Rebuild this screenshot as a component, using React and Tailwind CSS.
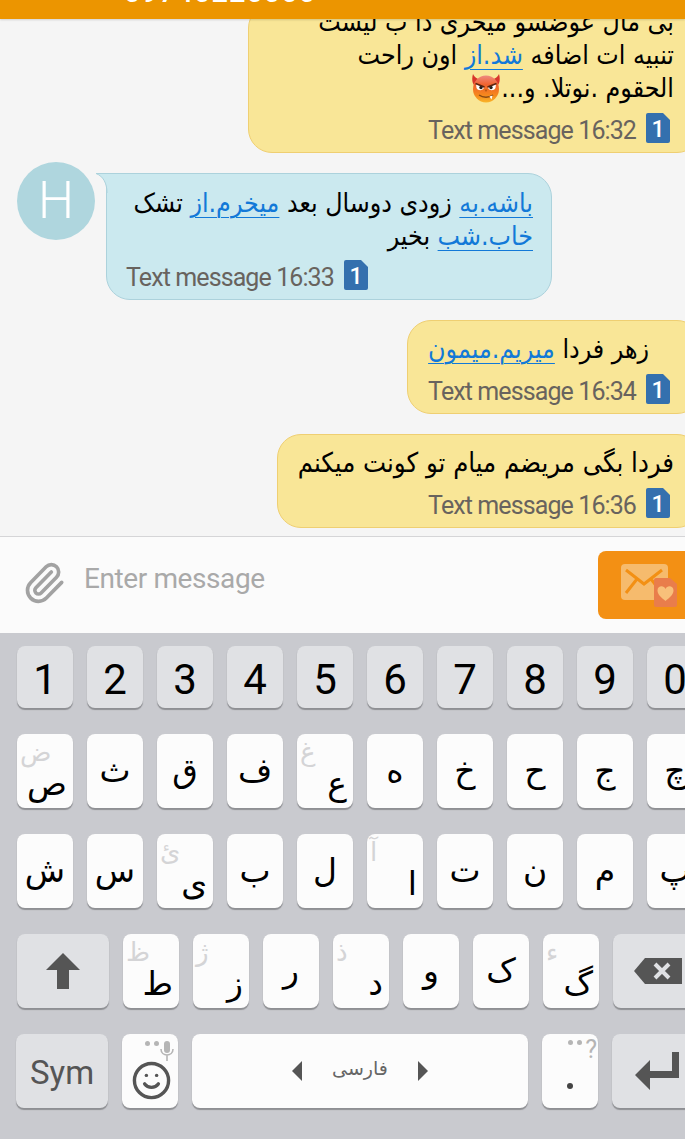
import { Paperclip, Smile } from 'lucide-react';

const row2 = [
  { c: 'ص', h: 'ض' }, { c: 'ث' }, { c: 'ق' }, { c: 'ف' }, { c: 'ع', h: 'غ' },
  { c: 'ه' }, { c: 'خ' }, { c: 'ح' }, { c: 'ج' }, { c: 'چ' },
];
const row3 = [
  { c: 'ش' }, { c: 'س' }, { c: 'ی', h: 'ئ' }, { c: 'ب' }, { c: 'ل' },
  { c: 'ا', h: 'آ' }, { c: 'ت' }, { c: 'ن' }, { c: 'م' }, { c: 'پ' },
];
const row4 = [
  { c: 'ط', h: 'ظ' }, { c: 'ز', h: 'ژ' }, { c: 'ر' }, { c: 'د', h: 'ذ' },
  { c: 'و' }, { c: 'ک' }, { c: 'گ', h: 'ء' },
];

const arabic = "font-['DejaVu_Sans',sans-serif]";
const bubbleText = "font-['DejaVu_Sans',sans-serif] [font-stretch:condensed] text-[26.5px] leading-[33px] text-black";

function Sim() {
  return (
    <svg width="24" height="30" viewBox="0 0 24 30" className="shrink-0">
      <path d="M2 0H17L24 7V28A2 2 0 0 1 22 30H2A2 2 0 0 1 0 28V2A2 2 0 0 1 2 0Z" fill="#3470ae" />
      <text x="12" y="24" textAnchor="middle" fontSize="23" fontWeight="500" fill="#fff" fontFamily="Roboto, sans-serif">1</text>
    </svg>
  );
}

function Meta({ time, reverse }) {
  return (
    <div dir="ltr" className={`flex items-end gap-[10px] ${reverse ? 'justify-end' : 'justify-start'}`}>
      <span className="font-['Roboto',sans-serif] text-[25px] leading-[24px] tracking-[-0.9px] text-[#68635e]">
        Text message {time}
      </span>
      <Sim />
    </div>
  );
}

function Link({ children }) {
  return <span className="text-[#1279d8] underline underline-offset-[5px] decoration-[1px]">{children}</span>;
}

function Devil() {
  return (
    <svg width="30" height="30" viewBox="0 0 30 30" className="inline-block align-[-6px]">
      <defs>
        <linearGradient id="devilFace" x1="0" y1="0" x2="0" y2="1">
          <stop offset="0" stopColor="#ee8a80" />
          <stop offset="0.35" stopColor="#f0622c" />
          <stop offset="0.75" stopColor="#f68a1c" />
          <stop offset="1" stopColor="#f9b52a" />
        </linearGradient>
      </defs>
      <path d="M2 1C0 8 2 13 7 15L12 7C8 7 4 5 2 1ZM28 1C30 8 28 13 23 15L18 7C22 7 26 5 28 1Z" fill="#d8352a" />
      <ellipse cx="15" cy="16" rx="13" ry="13.5" fill="url(#devilFace)" />
      <path d="M5 11L13 14.500C12 18 7 18 5.500 15ZM25 11L17 14.500C18 18 23 18 24.500 15Z" fill="#fff" />
      <circle cx="10" cy="14.500" r="1.700" fill="#222" />
      <circle cx="20" cy="14.500" r="1.700" fill="#222" />
      <path d="M4.500 10.500L13.500 14M25.500 10.500L16.500 14" stroke="#5a2410" strokeWidth="1.600" />
      <path d="M13.500 16.500H16.500L15 19Z" fill="#b85a10" />
      <path d="M8 22C12 25 18 25 22 22" stroke="#8a4a12" strokeWidth="1.300" fill="none" />
      <path d="M18.500 23.500L20.500 26.500L21.500 22.500Z" fill="#fff" />
    </svg>
  );
}

function Outgoing({ children, time, className }) {
  return (
    <div className={`shrink-0 -mr-4 pr-[30px] pb-[9px] rounded-[24px] border border-[#efcf72] bg-[#f9e697] ${className}`}>
      <div dir="rtl" className={`-mr-[4px] ${bubbleText}`}>{children}</div>
      <Meta time={time} reverse />
    </div>
  );
}

function Key({ c, h }) {
  return (
    <div className="relative flex h-[74px] w-[56px] shrink-0 rounded-lg bg-[#fcfcfc] shadow-[0_1.5px_1px_#8e8f93]">
      {h && (
        <span className={`${arabic} absolute left-[3px] top-[3px] text-[26px] leading-[30px] text-[#d4d4d6]`}>{h}</span>
      )}
      <span
        className={`${arabic} text-[33px] leading-[40px] text-black ${
          h ? 'ml-auto mt-auto mr-[6px] mb-[4px]' : 'm-auto'
        }`}
      >
        {c}
      </span>
    </div>
  );
}

function FnKey({ children, className }) {
  return (
    <div className={`flex h-[74px] shrink-0 items-center justify-center rounded-lg bg-[#e0e1e4] shadow-[0_1.5px_1px_#8e8f93] ${className}`}>
      {children}
    </div>
  );
}

export default function App() {
  return (
    <div className="flex h-[1139px] w-[685px] flex-col overflow-hidden bg-[#f5f5f5]">
      {/* Top bar, the number is cut off by the screen edge */}
      <div className="relative z-10 h-[19px] shrink-0 overflow-hidden bg-[#ec9500] pl-[124px] shadow-[0_1px_2px_rgba(0,0,0,0.15)]">
        <div className="-mt-[23px] font-['Roboto',sans-serif] text-[29px] font-medium leading-[30px] tracking-[1px] text-white">
          09740220000
        </div>
      </div>

      {/* Messages */}
      <div className="flex h-[517px] shrink-0 flex-col items-end justify-end gap-5 overflow-hidden pb-2">
        <Outgoing time="16:32" className="w-[453px] pl-[20px]">
          <div>بی مال عوضسو میخری دا ب لیست</div>
          <div>تنبیه ات اضافه <Link>شد.از</Link> اون راحت</div>
          <div className="mb-[9px]">الحقوم .نوتلا. و...<Devil /></div>
        </Outgoing>

        <div className="flex w-full shrink-0 items-start pl-[17px]">
          <div className="-mt-[11px] flex h-[78px] w-[78px] shrink-0 items-center justify-center rounded-full bg-[#afd6de] font-['Roboto',sans-serif] text-[51px] font-light text-white">
            H
          </div>
          <div className="relative ml-[11px] w-[446px] rounded-[24px] rounded-tl-none border border-[#acd2dc] bg-[#cbe9ef] pb-[9px] pl-[19px] pr-[18px] pt-[12px]">
            <svg width="12" height="20" viewBox="0 0 12 20" className="absolute -left-[11px] -top-px">
              <path d="M0 .5H12V20H11C11 10 7 3 0 .5Z" fill="#cbe9ef" />
              <path d="M0 .5H12M0 .5C7 3 11 10 11 20" stroke="#acd2dc" fill="none" />
            </svg>
            <div dir="rtl" className={`mb-[8px] ${bubbleText}`}>
              <Link>باشه.به</Link> زودی دوسال بعد <Link>میخرم.از</Link> تشک <Link>خاب.شب</Link> بخیر
            </div>
            <Meta time="16:33" />
          </div>
        </div>

        <Outgoing time="16:34" className="pl-[20px] pt-[11px]">
          <div className="mb-[9px] text-left">زهر فردا <Link>میریم.میمون</Link></div>
        </Outgoing>

        <Outgoing time="16:36" className="pl-[20px] pt-[11px]">
          <div className="mb-[9px] text-[27.2px]">فردا بگی مریضم میام تو کونت میکنم</div>
        </Outgoing>
      </div>

      {/* Composer */}
      <div className="flex h-[97px] shrink-0 items-center border-t border-[#d5d5d7] bg-[#fbfbfb]">
        <Paperclip size={44} strokeWidth={2} className="ml-[22px] -mt-[4px] shrink-0 text-[#a2a2a2]" />
        <span className="ml-[18px] -mt-[12px] font-['Roboto',sans-serif] text-[28px] tracking-[-0.4px] text-[#a9a9a9]">
          Enter message
        </span>
        <div className="ml-auto flex h-[68px] w-[87px] shrink-0 items-center rounded-l-lg bg-[#f39014] pl-[22px]">
          <svg width="58" height="46" viewBox="0 0 58 46">
            <rect x="1" y="2" width="47" height="36" rx="4" fill="#f6bb6d" />
            <path d="M6 8L24 22L42 8M6 31L17 17M42 31L31 17" stroke="#f39014" strokeWidth="3" fill="none" />
            <path d="M36 16H50L57 22V43A2 2 0 0 1 55 45H36A2 2 0 0 1 34 43V18A2 2 0 0 1 36 16Z" fill="#e97d4b" />
            <path d="M45.500 39C42 36 37.500 33 37.500 28.500C37.500 23.500 44 23 45.500 27C47 23 53.500 23.500 53.500 28.500C53.500 33 49 36 45.500 39Z" fill="#f8c07a" />
          </svg>
        </div>
      </div>

      {/* Keyboard */}
      <div className="flex min-h-0 flex-1 flex-col overflow-hidden bg-[#c9cacf] pt-[13px]">
        <div className="flex gap-[14px] pl-[17px]">
          {['1', '2', '3', '4', '5', '6', '7', '8', '9', '0'].map((d) => (
            <div
              key={d}
              className="flex h-[62px] w-[56px] shrink-0 items-center justify-center rounded-lg bg-[#e0e1e4] pt-[5px] font-['Roboto',sans-serif] text-[42px] text-black shadow-[0_1.5px_1px_#8e8f93]"
            >
              {d}
            </div>
          ))}
        </div>

        <div className="mt-[26px] flex gap-[14px] pl-[17px]">
          {row2.map((k) => <Key key={k.c} {...k} />)}
        </div>

        <div className="mt-[26px] flex gap-[14px] pl-[17px]">
          {row3.map((k) => <Key key={k.c} {...k} />)}
        </div>

        <div className="mt-[26px] flex gap-[14px] pl-[17px]">
          <FnKey className="w-[92px]">
            <svg width="34" height="36" viewBox="0 0 34 36">
              <path d="M17 0L34 17H23V36H11V17H0Z" fill="#555" />
            </svg>
          </FnKey>
          {row4.map((k) => <Key key={k.c} {...k} />)}
          <FnKey className="w-[90px] justify-start pl-[21px]">
            <svg width="48" height="27" viewBox="0 0 48 27">
              <path d="M11 0H48V26H11L0 13Z" fill="#555" />
              <path d="M21 6L35 20M35 6L21 20" stroke="#e0e1e4" strokeWidth="4" />
            </svg>
          </FnKey>
        </div>

        <div className="mt-[26px] flex gap-[14px] pl-[16px]">
          <FnKey className="w-[92px] pt-[4px] font-['Roboto',sans-serif] text-[33px] text-[#555]">Sym</FnKey>
          <div className="relative flex h-[74px] w-[56px] shrink-0 items-end justify-start rounded-lg bg-[#fcfcfc] pb-[7px] pl-[9px] shadow-[0_1.5px_1px_#8e8f93]">
            <span className="absolute left-[23px] top-[7px] h-[5px] w-[5px] rounded-full bg-[#b5b5b5]" />
            <span className="absolute left-[32px] top-[7px] h-[5px] w-[5px] rounded-full bg-[#b5b5b5]" />
            <svg width="14" height="20" viewBox="0 0 14 20" className="absolute left-[38px] top-[7px]">
              <rect x="4" y="0" width="6" height="12" rx="3" fill="#b5b5b5" />
              <path d="M1 8C1 16 13 16 13 8M7 14V20" stroke="#b5b5b5" strokeWidth="1.6" fill="none" />
            </svg>
            <Smile size={41} strokeWidth={2} className="text-[#555]" />
          </div>
          <div className="flex h-[74px] w-[336px] shrink-0 items-center justify-center gap-[30px] rounded-lg bg-[#fcfcfc] shadow-[0_1.5px_1px_#8e8f93]">
            <svg width="10" height="20" viewBox="0 0 10 20"><path d="M10 0V20L0 10Z" fill="#555" /></svg>
            <span className={`${arabic} -mt-[6px] text-[19px] text-[#666]`}>فارسی</span>
            <svg width="10" height="20" viewBox="0 0 10 20"><path d="M0 0V20L10 10Z" fill="#555" /></svg>
          </div>
          <div className="relative flex h-[74px] w-[56px] shrink-0 rounded-lg bg-[#fcfcfc] shadow-[0_1.5px_1px_#8e8f93]">
            <span className="absolute left-[26px] top-[6px] h-[5px] w-[5px] rounded-full bg-[#b5b5b5]" />
            <span className="absolute left-[35px] top-[6px] h-[5px] w-[5px] rounded-full bg-[#b5b5b5]" />
            <span className="absolute right-[1px] top-[1px] font-['Roboto',sans-serif] text-[25px] leading-[30px] text-[#b5b5b5]">?</span>
            <span className="absolute left-[25px] top-[49px] h-[6px] w-[6px] rounded-full bg-[#444]" />
          </div>
          <FnKey className="w-[90px] justify-start pl-[23px]">
            <svg width="44" height="38" viewBox="0 0 44 38">
              <path d="M37 0H44V26H15V38L0 23L15 8V19H37Z" fill="#555" />
            </svg>
          </FnKey>
        </div>
      </div>
    </div>
  );
}
